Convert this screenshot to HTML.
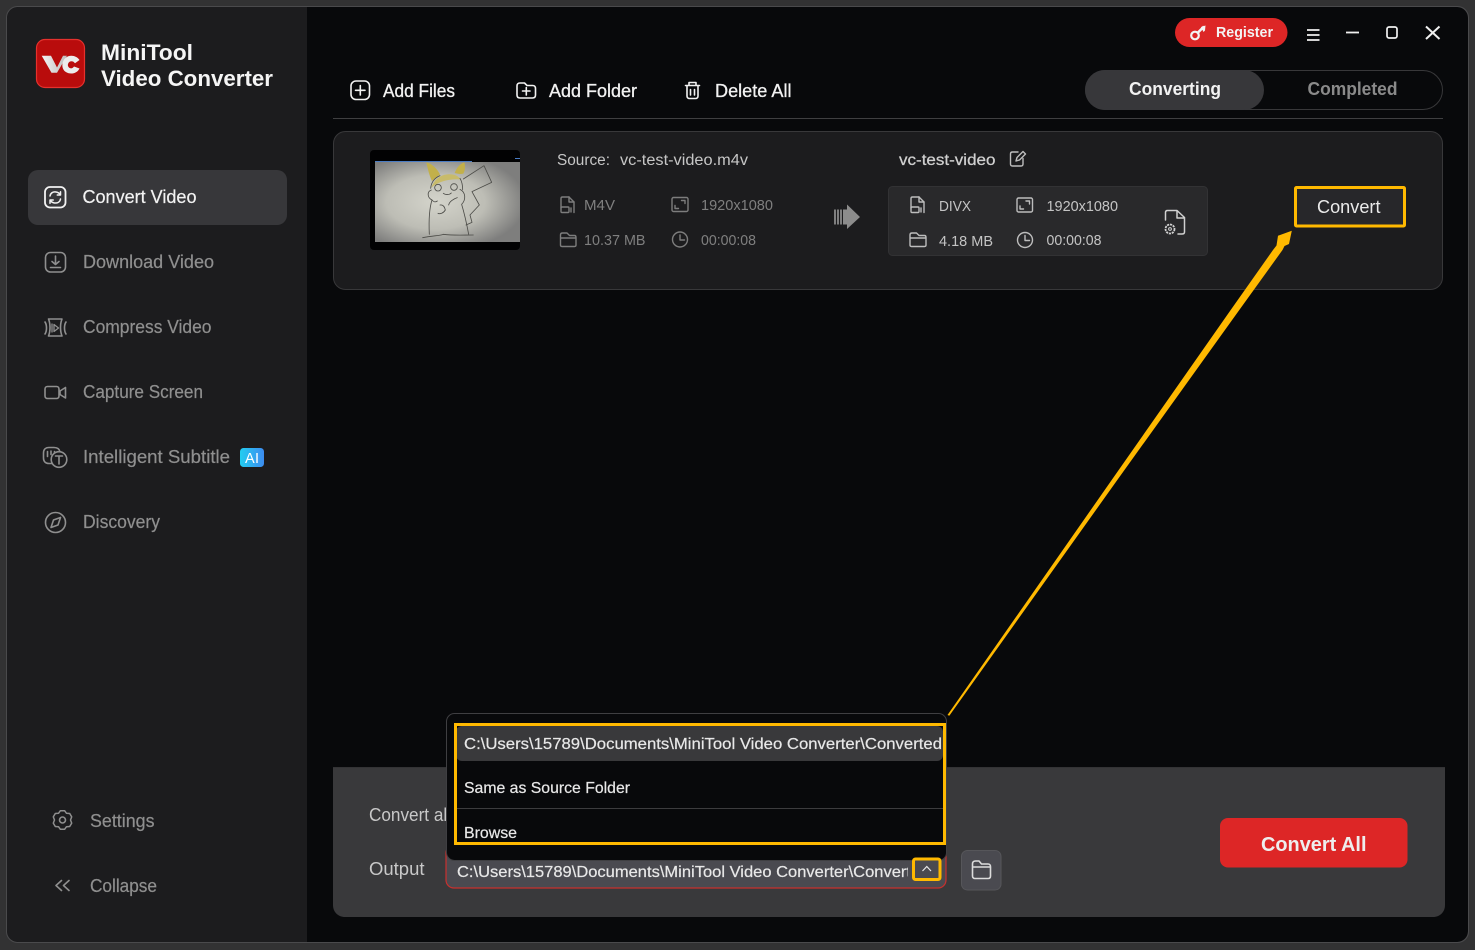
<!DOCTYPE html>
<html lang="en"><head><meta charset="utf-8"><title>MiniTool Video Converter</title>
<style>
html,body{margin:0;padding:0;background:#323233;width:1475px;height:950px;overflow:hidden}
svg{display:block}
text{font-family:"Liberation Sans",sans-serif;white-space:pre}
.nav{font-size:18px;fill:#8f8f8f;stroke:#8f8f8f;stroke-width:.2}
.ico{fill:none;stroke:#8f8f8f;stroke-width:1.6;stroke-linecap:round;stroke-linejoin:round}
.w{fill:none;stroke:#f2f2f2;stroke-width:1.6;stroke-linecap:round;stroke-linejoin:round}
.g{fill:none;stroke:#7d7d7d;stroke-width:1.4;stroke-linecap:round;stroke-linejoin:round}
.l{fill:none;stroke:#bdbdbd;stroke-width:1.4;stroke-linecap:round;stroke-linejoin:round}
.tb{font-size:18px;fill:#f2f2f2;stroke:#f2f2f2;stroke-width:.3}
.m{font-size:15px;fill:#7f7f7f}
.o{font-size:15px;fill:#c4c4c4}
.dd{font-size:16px;fill:#e8e8e8;stroke:#e8e8e8;stroke-width:.2}
</style></head><body>
<svg width="1475" height="950" viewBox="0 0 1475 950" xmlns="http://www.w3.org/2000/svg">
<defs>
<radialGradient id="pg" cx="42%" cy="50%" r="62%"><stop offset="0" stop-color="#d4d4cb"/><stop offset=".55" stop-color="#bdbdb5"/><stop offset="1" stop-color="#7e7e7d"/></radialGradient>
<linearGradient id="ai" x1="0" x2="1"><stop offset="0" stop-color="#22cdf0"/><stop offset="1" stop-color="#3d8cf0"/></linearGradient>
<linearGradient id="v" x1="0" x2="1"><stop offset="0" stop-color="#f4f4f4"/><stop offset="1" stop-color="#bdbdbd"/></linearGradient>
<clipPath id="win"><rect x="7" y="7" width="1461" height="935" rx="11"/></clipPath>
<clipPath id="ot"><rect x="450" y="860" width="458" height="28"/></clipPath>
</defs>
<rect width="1475" height="950" fill="#323233"/>
<rect x="7" y="7" width="1461" height="935" rx="11" fill="#08090b"/>
<g clip-path="url(#win)"><rect x="7" y="7" width="300" height="935" fill="#1c1c1e"/></g>
<rect x="6.500" y="6.500" width="1462" height="936" rx="11" fill="none" stroke="#4a4a4c"/>

<!-- logo -->
<rect x="36.500" y="39.500" width="48" height="48" rx="8.500" fill="#b90c0c" stroke="#e5312d" stroke-width="1.200"/>
<path d="M41.700 55.700H51L57 67.500L63 55.700H67L57 72.800H51.500Z" fill="url(#v)"/>
<path d="M79.500 60C76.500 55.500 70 54.500 66 57.500C61.500 61 61 68.500 65.500 71.800C70 75 77 73.800 79.500 68.500L74 66.500C72.500 69 69 69 68 66C67.300 63 70 60 73.500 61.800L75 63.300Z" fill="#ececec"/>
<text x="101" y="60" font-size="22.500" font-weight="700" fill="#f5f5f5" textLength="92" lengthAdjust="spacingAndGlyphs">MiniTool</text>
<text x="101" y="86" font-size="22.500" font-weight="700" fill="#f5f5f5" textLength="172" lengthAdjust="spacingAndGlyphs">Video Converter</text>

<!-- nav -->
<rect x="28" y="170" width="259" height="55" rx="10" fill="#37373a"/>
<rect x="45" y="187" width="20.500" height="20.500" rx="5" class="w" style="stroke-width:1.800"/>
<path d="M50 196C50.500 193 53 191.500 56 192C58 192.300 59.500 193.300 60.500 194.800M60.500 191.800V195H57.300M60.500 199C60 202 57.500 203.300 54.500 203C52.500 202.700 51 201.700 50 200.200M50 203.200V200H53.200" class="w" style="stroke-width:1.500"/>
<text x="82.500" y="203" font-size="18" fill="#f2f2f2" stroke="#f2f2f2" stroke-width=".2" textLength="114" lengthAdjust="spacingAndGlyphs">Convert Video</text>

<rect x="45.500" y="252.500" width="20" height="19.500" rx="5" class="ico"/>
<path d="M55.500 256V264.500M52 261.500L55.500 264.500L59 261.500M50.500 267.500H60.500" class="ico"/>
<text class="nav" x="83" y="268" textLength="131" lengthAdjust="spacingAndGlyphs">Download Video</text>

<path d="M48.500 319H62C60 324 60 331 62 336H48.500C50.500 331 50.500 324 48.500 319Z" class="ico"/>
<path d="M52 324V332M54 324.500V331.500L58.500 328Z" class="ico" style="stroke-width:1.300"/>
<path d="M45 322C47 325 47 331 45 334M66 322C64 325 64 331 66 334" class="ico"/>
<text class="nav" x="83" y="333" textLength="128.500" lengthAdjust="spacingAndGlyphs">Compress Video</text>

<rect x="45" y="386.500" width="14" height="12" rx="2.500" class="ico"/>
<path d="M65.500 387.500V398L60 394.500V391Z" class="ico"/>
<text class="nav" x="83" y="398" textLength="120" lengthAdjust="spacingAndGlyphs">Capture Screen</text>

<path d="M52 463.500H49C45.500 463.500 43.500 461.500 43.500 458V453C43.500 449.500 45.500 447.500 49 447.500H54C57.500 447.500 59.500 449 60 452" class="ico"/>
<path d="M47.500 451.500V456.500M51 451V454.500M54.500 451.500V453" class="ico"/>
<circle cx="59" cy="459.500" r="7.800" class="ico" style="fill:#1c1c1e"/>
<path d="M55.500 456H62.500M59 456V464" class="ico"/>
<text class="nav" x="83" y="463" textLength="147" lengthAdjust="spacingAndGlyphs">Intelligent Subtitle</text>
<rect x="240" y="448" width="24" height="19" rx="3.500" fill="url(#ai)"/>
<text x="245" y="463" font-size="14.500" fill="#fff" textLength="14">AI</text>

<circle cx="55.500" cy="522.500" r="10" class="ico"/>
<path d="M60.500 517.500L58 525L51 527.500L53.500 520Z" class="ico"/>
<text class="nav" x="83" y="528" textLength="77" lengthAdjust="spacingAndGlyphs">Discovery</text>

<path d="M60.400 810.700H64.600L66.500 813.300L69.700 813.500L71.700 816.900L70.500 820L71.700 823.100L69.700 826.500L66.500 826.700L64.600 829.300H60.400L58.500 826.700L55.300 826.500L53.300 823.100L54.500 820L53.300 816.900L55.300 813.500L58.500 813.300Z" class="ico" style="stroke-width:1.500"/>
<circle cx="62.500" cy="820" r="3" class="ico"/>
<text class="nav" x="90" y="827" textLength="64.500" lengthAdjust="spacingAndGlyphs">Settings</text>
<path d="M61.500 880.500L56 885.500L61.500 890.500M69 880.500L63.500 885.500L69 890.500" class="ico"/>
<text class="nav" x="90" y="892" textLength="67" lengthAdjust="spacingAndGlyphs">Collapse</text>

<!-- window controls -->
<rect x="1175" y="18" width="112.500" height="29" rx="14.500" fill="#dd2626"/>
<circle cx="1195" cy="35.500" r="3.800" fill="none" stroke="#f3f3f3" stroke-width="2.200"/>
<path d="M1198 32.500L1204 26.500" fill="none" stroke="#f3f3f3" stroke-width="2.600"/>
<path d="M1201 27L1205.500 25.500L1205 30.500L1203.500 32Z" fill="#f3f3f3"/>
<text x="1216" y="37" font-size="14.500" font-weight="700" fill="#f3f3f3" textLength="57" lengthAdjust="spacingAndGlyphs">Register</text>
<path d="M1307 30H1319.500M1307 35H1319.500M1307 40H1319.500" stroke="#f0f0f0" stroke-width="1.700" fill="none"/>
<path d="M1346 32.500H1359" stroke="#f0f0f0" stroke-width="1.800" fill="none"/>
<rect x="1387" y="27" width="10" height="11" rx="2" fill="none" stroke="#f0f0f0" stroke-width="1.700"/>
<path d="M1426 26.500L1439.500 39M1439.500 26.500L1426 39" stroke="#f0f0f0" stroke-width="2" fill="none"/>

<!-- toolbar -->
<rect x="351" y="81" width="18.500" height="18.500" rx="5" class="w"/>
<path d="M360.300 85.500V95M355.500 90.300H365" class="w"/>
<text class="tb" x="383" y="97" textLength="72" lengthAdjust="spacingAndGlyphs">Add Files</text>
<path d="M517 86C517 84 518 83 520 83H524.500L527 85.500H532.500C534.500 85.500 535.500 86.500 535.500 88.500V95C535.500 97 534.500 98 532.500 98H520C518 98 517 97 517 95Z" class="w"/>
<path d="M526.300 87.500V95M522.500 91H530" class="w"/>
<text class="tb" x="549" y="97" textLength="88" lengthAdjust="spacingAndGlyphs">Add Folder</text>
<path d="M685.500 85.500H699.500M689 85V82.500H696V85M687 85.500V96C687 97.500 688 98.500 689.500 98.500H695.500C697 98.500 698 97.500 698 96V85.500M690.500 89.500V95M694.500 89.500V95" class="w"/>
<text class="tb" x="715" y="97" textLength="76.500" lengthAdjust="spacingAndGlyphs">Delete All</text>
<rect x="1085.500" y="70.500" width="357" height="39" rx="19.500" fill="none" stroke="#38383a"/>
<rect x="1085" y="70" width="179" height="40" rx="20" fill="#37373a"/>
<text x="1129" y="95" font-size="18" font-weight="700" fill="#f2f2f2" textLength="92" lengthAdjust="spacingAndGlyphs">Converting</text>
<text x="1307.500" y="95" font-size="18" font-weight="700" fill="#8a8a8a" textLength="90" lengthAdjust="spacingAndGlyphs">Completed</text>
<path d="M333 118.500H1443" stroke="#3f3f41"/>

<!-- card -->
<rect x="333.500" y="131.500" width="1109" height="158" rx="12" fill="#1c1c1e" stroke="#38383a"/>
<rect x="370" y="150" width="150" height="100" rx="4" fill="#020203"/>
<rect x="375" y="162" width="145" height="80" fill="url(#pg)"/>
<path d="M375 161.500H472" stroke="#4a7cc4" stroke-width="1"/>
<path d="M515 158.500H520" stroke="#4a7cc4" stroke-width="1"/>
<g transform="translate(360,145) scale(.3333)" fill="none" stroke="#4c4c48" stroke-width="2.500" stroke-linejoin="round" stroke-linecap="round">
<path d="M199 52C203 70 208 92 216 108C226 98 236 92 240 88C232 72 215 55 199 52Z" fill="#c2b04a" stroke="none"/>
<path d="M313 52C300 56 290 68 284 84C292 86 300 88 310 86C316 76 316 62 313 52Z" fill="#c2b04a" stroke="none"/>
<path d="M214 128C222 104 240 90 262 88C280 86 296 92 303 104C285 100 240 104 214 128Z" fill="#c8bb6a" stroke="none"/>
<path d="M212 130C214 110 226 98 240 92M300 100C306 110 308 122 308 134"/>
<circle cx="234" cy="128" r="10"/><circle cx="282" cy="126" r="10"/>
<path d="M250 145C256 150 268 150 274 144"/>
<path d="M214 135C200 140 202 158 216 165C208 190 206 225 208 268M300 133C318 142 318 165 305 178C313 205 320 235 326 268"/>
<path d="M216 165C222 172 226 172 232 168M266 180C268 170 280 162 292 158M240 180C250 178 254 186 256 195C250 205 240 208 234 205"/>
<path d="M310 102L372 62L395 112L336 140L358 180L330 210L336 232L318 240"/>
<path d="M188 278C220 272 240 272 250 268C280 272 310 270 340 270"/>
</g>
<text x="557" y="165" font-size="15.500" fill="#c6c6c6" textLength="53" lengthAdjust="spacingAndGlyphs">Source:</text>
<text x="620" y="165" font-size="15.500" fill="#c6c6c6" textLength="128" lengthAdjust="spacingAndGlyphs">vc-test-video.m4v</text>

<path d="M561 208V198.500C561 197.500 561.700 197 562.500 197H569L574 202V212.500" class="g"/><path d="M569 197V202H574" class="g"/><rect x="561" y="207" width="8" height="5.500" rx="1" class="g"/><path d="M571 208V212" class="g"/>
<text class="m" x="584" y="210" textLength="31" lengthAdjust="spacingAndGlyphs">M4V</text>
<rect x="672" y="197.500" width="16" height="14" rx="1.500" class="g"/><path d="M681.500 200.500H685V203.500M678.500 208.500H675V205.500" class="g"/>
<text class="m" x="701" y="210" textLength="72" lengthAdjust="spacingAndGlyphs">1920x1080</text>
<path d="M560.500 235C560.500 233.500 561.200 233 562.500 233H567L569.500 235.500H574.500C575.700 235.500 576 236.200 576 237.500V245C576 246 575.500 246.500 574.500 246.500H562C561 246.500 560.500 246 560.500 245ZM560.500 238H576" class="g"/>
<text class="m" x="584" y="245" textLength="61.500" lengthAdjust="spacingAndGlyphs">10.37 MB</text>
<circle cx="680" cy="239.500" r="7.500" class="g"/><path d="M680 235V240H684.500" class="g"/>
<text class="m" x="701" y="245" textLength="55" lengthAdjust="spacingAndGlyphs">00:00:08</text>

<path d="M835 209.500V224.500M838 209.500V224.500M841 209.500V224.500" stroke="#8a8a8a" stroke-width="1.800"/>
<path d="M843 209.500H847V204.500L860 217L847 229V224.500H843Z" fill="#8c8c8c"/>

<text x="899" y="165" font-size="15.500" fill="#d0d0d0" stroke="#d0d0d0" stroke-width=".25" textLength="96.500" lengthAdjust="spacingAndGlyphs">vc-test-video</text>
<path d="M1023 158.500V164C1023 165.300 1022.300 166 1021 166H1012.500C1011.300 166 1010.500 165.300 1010.500 164V154C1010.500 152.700 1011.300 152 1012.500 152H1018" class="l"/><path d="M1016 161L1017 157.500L1023 151.500L1025.500 154L1019.500 160Z" class="l"/>

<rect x="888.500" y="186.500" width="319" height="69" rx="4" fill="#29292b" stroke="#323234"/>
<path d="M911 208V198.500C911 197.500 911.700 197 912.500 197H919L924 202V212.500" class="l"/><path d="M919 197V202H924" class="l"/><rect x="911" y="207" width="8" height="5.500" rx="1" class="l"/><path d="M921 208V212" class="l"/>
<text class="o" x="939" y="211" textLength="32" lengthAdjust="spacingAndGlyphs">DIVX</text>
<rect x="1017" y="198" width="15.500" height="14" rx="1.500" class="l"/><path d="M1026 201H1029.500V204M1023.500 209H1020V206" class="l"/>
<text class="o" x="1046.500" y="211" textLength="71.500" lengthAdjust="spacingAndGlyphs">1920x1080</text>
<path d="M910 235C910 233.500 910.700 233 912 233H916.500L919 235.500H924.500C925.700 235.500 926 236.200 926 237.500V245C926 246 925.500 246.500 924.500 246.500H911.500C910.500 246.500 910 246 910 245ZM910 238H926" class="l"/>
<text class="o" x="939" y="246" textLength="54" lengthAdjust="spacingAndGlyphs">4.18 MB</text>
<circle cx="1025" cy="240" r="7.500" class="l"/><path d="M1025 235.500V240.500H1029.500" class="l"/>
<text class="o" x="1046.500" y="245" textLength="55" lengthAdjust="spacingAndGlyphs">00:00:08</text>
<path d="M1165.500 220V212.500C1165.500 211 1166.200 210.500 1167.500 210.500H1177L1184.500 217.500V232C1184.500 233.500 1183.500 234 1182 234H1178M1177 211V218H1184.500" class="l" style="stroke:#d0d0d0;stroke-width:1.500"/>
<circle cx="1170" cy="229" r="4.500" fill="none" stroke="#d0d0d0" stroke-width="1.800" stroke-dasharray="2.200 .8"/><circle cx="1170" cy="229" r="1.400" fill="none" stroke="#d0d0d0"/>

<rect x="1295.500" y="187.500" width="109" height="38.500" fill="#27272a" stroke="#ffb900" stroke-width="3" rx="1"/>
<text x="1317" y="213" font-size="18" fill="#eaeaea" textLength="63.500" lengthAdjust="spacingAndGlyphs">Convert</text>

<!-- bottom bar -->
<path d="M333 768H1445V905C1445 912 1440 917 1433 917H345C338 917 333 912 333 905Z" fill="#39393b"/>
<path d="M333 767.500H1445" stroke="#333335"/>
<text x="369" y="821" font-size="18" fill="#c8c8c8" textLength="82" lengthAdjust="spacingAndGlyphs">Convert all</text>
<text x="369" y="875" font-size="18" fill="#c8c8c8" textLength="55.500" lengthAdjust="spacingAndGlyphs">Output</text>
<rect x="446" y="845" width="500" height="43" rx="8" fill="#4a4a50" stroke="#c8302e" stroke-width="1.200"/>
<text clip-path="url(#ot)" x="457" y="877" font-size="16" fill="#e8e8e8" stroke="#e8e8e8" stroke-width=".2" textLength="454" lengthAdjust="spacingAndGlyphs">C:\Users\15789\Documents\MiniTool Video Converter\Convert</text>
<rect x="961.500" y="850.500" width="39.500" height="39.500" rx="6" fill="#4a4a50" stroke="#56565a"/>
<path d="M972.500 864C972.500 862 973.500 861 975.500 861H979L981.500 864H988C990 864 990.500 865 990.500 867V876C990.500 877.500 990 878.500 988 878.500H975C973.500 878.500 972.500 877.500 972.500 876ZM972.500 867H990.500" fill="none" stroke="#dcdcdc" stroke-width="1.600" stroke-linejoin="round"/>
<rect x="1220" y="818" width="187.500" height="49.500" rx="8" fill="#dd2626"/>
<text x="1261" y="851" font-size="20" font-weight="700" fill="#eeeeee" textLength="105.500" lengthAdjust="spacingAndGlyphs">Convert All</text>

<!-- dropdown -->
<rect x="446.500" y="713.500" width="500" height="147" rx="8" fill="#08090b" stroke="#3f3f42"/>
<rect x="456" y="726" width="487" height="35" rx="6" fill="#39393b"/>
<path d="M457 808.500H944" stroke="#3c3c3e"/>
<text class="dd" x="464" y="749" textLength="478" lengthAdjust="spacingAndGlyphs">C:\Users\15789\Documents\MiniTool Video Converter\Converted</text>
<text class="dd" x="464" y="793" textLength="166" lengthAdjust="spacingAndGlyphs">Same as Source Folder</text>
<text class="dd" x="464" y="838" textLength="53" lengthAdjust="spacingAndGlyphs">Browse</text>
<rect x="455.500" y="724.500" width="489" height="119" fill="none" stroke="#ffb900" stroke-width="3"/>
<rect x="913.500" y="859" width="26.500" height="20.500" rx="2" fill="#4a4a50" stroke="#ffb900" stroke-width="3"/>
<path d="M922.500 871L926.800 866.500L931 871" fill="none" stroke="#e8e8e8" stroke-width="1.200"/>

<!-- arrow -->
<path d="M947.500 715L1111.700 480L1230.700 310L1273 250L1276.500 245.500L1278 235.700L1291.800 230.700L1289 244L1284.500 246L1282.500 250L1239.300 310L1117.300 480L949.300 715.800Z" fill="#ffb900"/>
</svg>
</body></html>
